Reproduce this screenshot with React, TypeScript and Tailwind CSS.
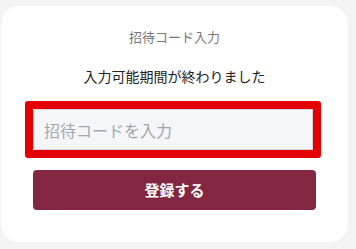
export default function App() {
  return (
    <div className="h-[249px] w-[356px] bg-[#f3f3f3] pt-[6px] pl-[1px] font-['Noto_Sans_CJK_JP','Noto_Sans',sans-serif]">
      <div className="flex h-[236px] w-[347px] flex-col items-center rounded-[18px] bg-white px-8 pt-[22px]">
        <h2 className="text-[13px] leading-[18px] text-[#777777]">招待コード入力</h2>
        <p className="mt-[20px] text-[14px] leading-[20px] text-[#222222]">入力可能期間が終わりました</p>
        <div className="mt-[15px] -ml-[8px] self-start rounded-[3px] border-8 border-[#e50000]">
          <input
            type="text"
            placeholder="招待コードを入力"
            className="block h-[41px] w-[280px] border border-[#d3d6dc] bg-[#f5f6fa] px-[10px] text-[16px] text-[#222] outline-none placeholder:text-[#a3a6ad]"
          />
        </div>
        <button className="mt-[12px] h-[40px] w-full rounded-[4px] bg-[#822641] text-[15px] font-bold text-white">
          登録する
        </button>
      </div>
    </div>
  );
}
